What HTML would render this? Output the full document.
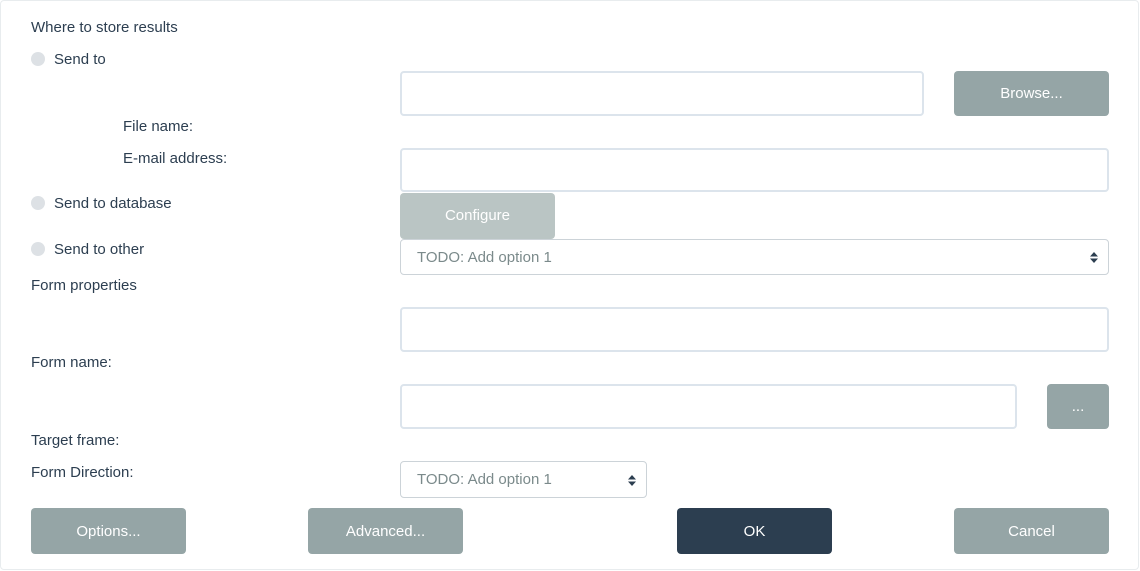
<!DOCTYPE html>
<html><head><style>
body{margin:0;width:1140px;height:571px;background:#fff;font-family:"Liberation Sans",sans-serif;font-size:15px;color:#2c3e50;position:relative;overflow:hidden}
.frame{position:absolute;left:0;top:0;width:1137px;height:568px;border:1px solid #e8ecee;border-radius:4px}
.t{position:absolute;line-height:16px;white-space:nowrap}
.r{position:absolute;left:31px;width:14px;height:14px;border-radius:50%;background:#dde1e5}
.in{position:absolute;box-sizing:border-box;border:2px solid #dce4ec;border-radius:4px;background:#fff}
.b{position:absolute;box-sizing:border-box;border-radius:4px;background:#95a5a6;color:#fff;text-align:center;font-size:15px}
.sel{position:absolute;box-sizing:border-box;border:1px solid #ccd3d8;border-radius:4px;background:#fff;color:#7b8a8b;padding-left:16px}
</style></head><body>
<div class="frame"></div>
<div class="t" style="left:31px;top:20px">Where to store results</div>
<div class="r" style="top:52px"></div><div class="t" style="left:54px;top:52px">Send to</div>
<div class="in" style="left:400px;top:71px;width:524px;height:45px"></div>
<div class="b" style="left:954px;top:71px;width:155px;height:45px;line-height:45px">Browse...</div>
<div class="t" style="left:123px;top:119px">File name:</div>
<div class="t" style="left:123px;top:151px">E-mail address:</div>
<div class="in" style="left:400px;top:148px;width:709px;height:44px"></div>
<div class="r" style="top:196px"></div><div class="t" style="left:54px;top:196px">Send to database</div>
<div class="b" style="left:400px;top:193px;width:155px;height:46px;line-height:46px;background:#bac5c4">Configure</div>
<div class="r" style="top:242px"></div><div class="t" style="left:54px;top:242px">Send to other</div>
<div class="sel" style="left:400px;top:239px;width:709px;height:36px;line-height:35px">TODO: Add option 1<svg style="position:absolute;right:10px;top:12px" width="8" height="11"><path d="M0 4.5L4 0L8 4.5Z M0 6.5L4 11L8 6.5Z" fill="#2c3e50"/></svg></div>
<div class="t" style="left:31px;top:278px">Form properties</div>
<div class="in" style="left:400px;top:307px;width:709px;height:45px"></div>
<div class="t" style="left:31px;top:355px">Form name:</div>
<div class="in" style="left:400px;top:384px;width:617px;height:45px"></div>
<div class="b" style="left:1047px;top:384px;width:62px;height:45px;line-height:45px">...</div>
<div class="t" style="left:31px;top:433px">Target frame:</div>
<div class="t" style="left:31px;top:465px">Form Direction:</div>
<div class="sel" style="left:400px;top:461px;width:247px;height:37px;line-height:36px">TODO: Add option 1<svg style="position:absolute;right:10px;top:13px" width="8" height="11"><path d="M0 4.5L4 0L8 4.5Z M0 6.5L4 11L8 6.5Z" fill="#2c3e50"/></svg></div>
<div class="b" style="left:31px;top:508px;width:155px;height:46px;line-height:47px">Options...</div>
<div class="b" style="left:308px;top:508px;width:155px;height:46px;line-height:47px">Advanced...</div>
<div class="b" style="left:677px;top:508px;width:155px;height:46px;line-height:47px;background:#2c3e50">OK</div>
<div class="b" style="left:954px;top:508px;width:155px;height:46px;line-height:47px">Cancel</div>
</body></html>
